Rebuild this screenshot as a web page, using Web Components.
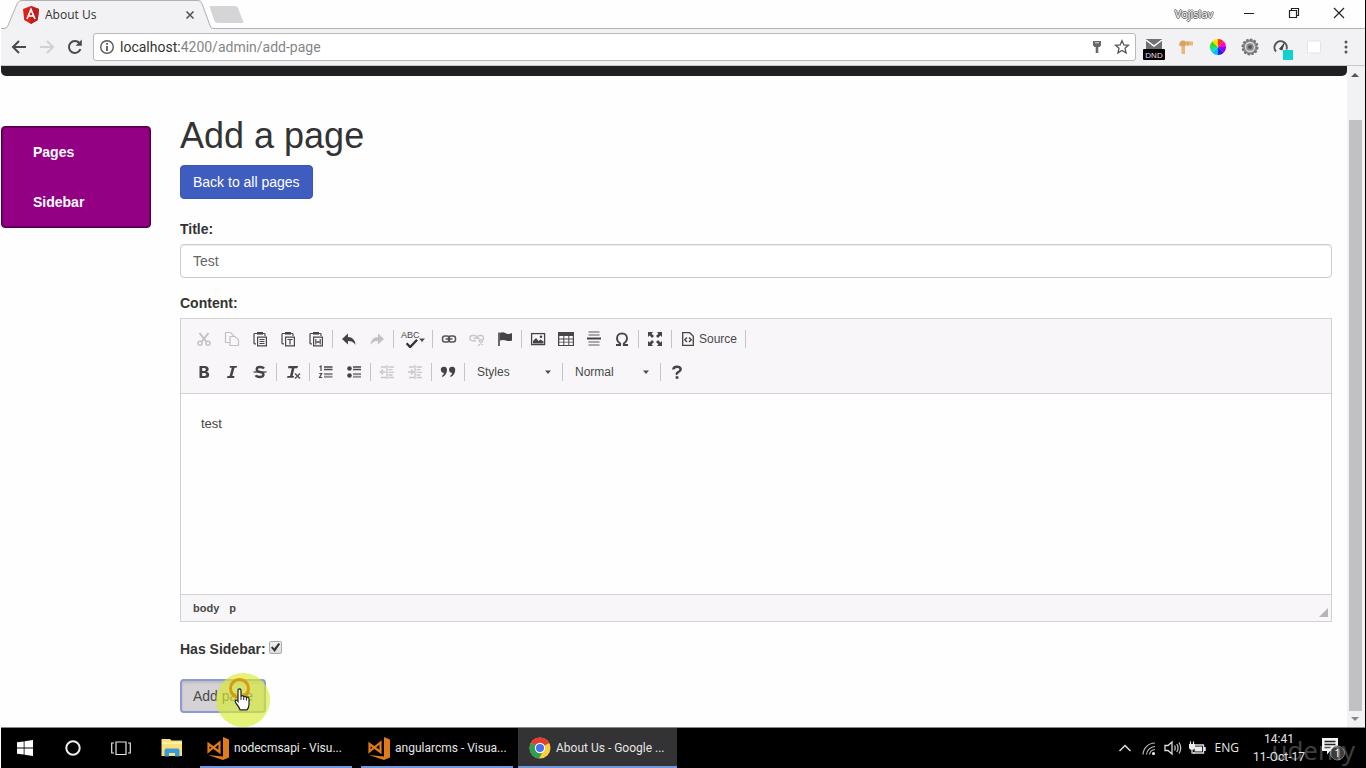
<!DOCTYPE html>
<html lang="en">
<head>
<meta charset="utf-8">
<title>About Us</title>
<style>
html,body{margin:0;height:100%}
body{background:#fefefe;font-family:"Liberation Sans",Arial,sans-serif;color:#333}
</style>
</head>
<body>
<desktop-screen></desktop-screen>
<script>
const BASE = `*{box-sizing:border-box}
button,input,select,textarea{font:inherit;color:inherit;margin:0}
button{border:0;background:none;padding:0;display:flex;align-items:center;justify-content:center}
a{color:inherit;text-decoration:none}`;
function define(name, css, html) {
  const t = document.createElement('template');
  t.innerHTML = `<style>${BASE}${css}</style>${html}`;
  customElements.define(name, class extends HTMLElement {
    constructor() {
      super();
      this.attachShadow({ mode: 'open' }).append(t.content.cloneNode(true));
    }
  });
}

/* Icon set: [viewBox size, markup] */
const board = '<path d="M5 2.5H2.8Q2 2.5 2 3.3V12q0 .9.9.9H4M11 2.5h1.2q.8 0 .8.8V5" fill="none" stroke="#484848" stroke-width="1.2"/><path d="M5 1h6v2.6H5z" fill="#484848"/><path d="M5.6 6.1h8.8v8.8H5.6z" fill="#f8f6f8" stroke="#484848" stroke-width="1.2"/>';
const ICONS = {
  angular: [18, '<path d="M9 0l8 3-1.2 11L9 18l-6.800-4L1 3z" fill="#d8231f"/><path d="M9 0l8 3-1.200 11L9 18z" fill="#b81f22"/><path d="M5 13L9 3.500 13 13M6.500 10h5" fill="none" stroke="#fff" stroke-width="1.700"/>'],
  tabclose: [10, '<path d="M1.500 1.500l7 7M8.500 1.500l-7 7" stroke="#555" stroke-width="1.600"/>'],
  back: [16, '<path d="M15 8H2M8 2L2 8l6 6" fill="none" stroke="#4a4a4c" stroke-width="2"/>'],
  forward: [16, '<path d="M1 8h13M8 2l6 6-6 6" fill="none" stroke="#d2d0d2" stroke-width="2"/>'],
  reload: [16, '<path d="M13.500 10.200A6 6 0 1 1 12.500 4" fill="none" stroke="#4a4a4c" stroke-width="2"/><path d="M14.800.5v6.200H8.600z" fill="#4a4a4c"/>'],
  info: [16, '<circle cx="8" cy="8" r="6.300" fill="none" stroke="#58585a" stroke-width="1.400"/><path d="M8 7v5M8 4v1.800" stroke="#58585a" stroke-width="1.800"/>'],
  key: [16, '<path d="M4 2h8v4.500L10.500 8H9.300v6H6.700V8H5.500L4 6.500z" fill="#68686a"/><path d="M6 3.800h4" stroke="#ddd"/>'],
  star: [16, '<path d="M8 1.700l1.900 4.200 4.500.4-3.400 3 1.100 4.500L8 11.400l-4.100 2.400L5 9.300l-3.400-3 4.500-.4z" fill="none" stroke="#555" stroke-width="1.300"/>'],
  mail: [22, '<path d="M3 1h16v11H3z" fill="#707072"/><path d="M3 2l8 6 8-6" fill="none" stroke="#fff" stroke-width="1.500"/><rect y="11" width="22" height="11" rx="1" fill="#050505"/><text x="11" y="20" font-size="8" font-family="Liberation Sans" text-anchor="middle" fill="#f0d8ea">DND</text>'],
  crane: [18, '<path d="M4 3.500h12v4H8V16H4.500V8H2V5z" fill="#e9b877"/><circle cx="6" cy="5.500" r="3" fill="#dba361"/><path d="M11 7.500v-4" stroke="#c88f4d"/>'],
  wheel: [16, '<path d="M8 8V0a8 8 0 0 1 5.700 2.300z" fill="#f31"/><path d="M8 8l5.700-5.700A8 8 0 0 1 16 8z" fill="#f0c"/><path d="M8 8h8a8 8 0 0 1-2.300 5.700z" fill="#80f"/><path d="M8 8l5.700 5.700A8 8 0 0 1 8 16z" fill="#22d"/><path d="M8 8v8a8 8 0 0 1-5.700-2.300z" fill="#0bf"/><path d="M8 8l-5.700 5.700A8 8 0 0 1 0 8z" fill="#1da"/><path d="M8 8H0a8 8 0 0 1 2.300-5.700z" fill="#3d1"/><path d="M8 8L2.300 2.300A8 8 0 0 1 8 0z" fill="#fd0"/>'],
  gear: [18, '<circle cx="9" cy="9" r="7.500" fill="#8b8a8c" stroke="#6f6f71" stroke-width="2" stroke-dasharray="2.400 1.500"/><circle cx="9" cy="9" r="4.500" fill="none" stroke="#ddd" stroke-width="1.300"/><circle cx="9" cy="9" r="2" fill="#555"/>'],
  gauge: [22, '<path d="M5 13.500a6.200 6.200 0 1 1 10.500-2" fill="none" stroke="#555" stroke-width="2"/><path d="M8.500 11L13 5.500l-2 6.500z" fill="#444" stroke="#444"/><path d="M12 12h10v10H12z" fill="#12d0d0"/>'],
  blank: [16, '<rect x="1.500" y="2" width="13" height="12" rx="1" fill="#fff" stroke="#e3e2e4"/>'],
  menu: [16, '<g fill="#555"><circle cx="8" cy="3" r="1.500"/><circle cx="8" cy="8" r="1.500"/><circle cx="8" cy="13" r="1.500"/></g>'],
  min: [12, '<path d="M1 6.500h10" stroke="#222"/>'],
  restore: [12, '<path d="M1.500 3.500h7v7h-7zM3.500 3.500v-2h7v7h-2" fill="none" stroke="#222" stroke-width="1.200"/>'],
  close: [12, '<path d="M1 1l10 10M11 1L1 11" stroke="#222" stroke-width="1.200"/>'],
  cut: [16, '<g fill="none" stroke="#c2c0c2"><path d="M3.500 2l6.700 8.500M12.500 2L5.800 10.500" stroke-width="2"/><circle cx="4" cy="12.300" r="2" stroke-width="1.500"/><circle cx="12" cy="12.300" r="2" stroke-width="1.500"/></g>'],
  copy: [16, '<g fill="#f8f6f8" stroke="#c2c0c2" stroke-width="1.200"><path d="M1.500 1.500h5l3 3v7h-8z"/><path d="M6 5.500h5l3.500 3.500v5.500H6z"/></g>'],
  paste: [16, board + '<path d="M7.500 8.500h5M7.500 10.500h5M7.500 12.500h5" stroke="#484848" stroke-width="1.200"/>'],
  pastet: [16, board + '<path d="M7.500 8.500h5M10 8.500v5" stroke="#484848" stroke-width="1.200"/>'],
  pastew: [16, board + '<path d="M7.800 8v5.500M12.200 8v5.500M7.800 11h4.400M10 10v2" stroke="#484848" stroke-width="1.100"/>'],
  undo: [16, '<path d="M7 2.500v3.600q7 .3 7.500 8Q12 9.800 7 10v3.600L1 8z" fill="#444"/>'],
  redo: [16, '<path d="M9 2.500v3.600q-7 .3-7.500 8Q4 9.800 9 10v3.600L15 8z" fill="#c2c0c2"/>'],
  link: [16, '<g fill="none" stroke="#565656" stroke-width="1.500"><rect x="1.500" y="5" width="7" height="6" rx="2.500"/><rect x="7.500" y="5" width="7" height="6" rx="2.500"/><path d="M4.500 8h7"/></g>'],
  unlink: [16, '<g fill="none" stroke="#c8c6c8" stroke-width="1.400"><path d="M8 6.500Q7.500 4.500 5.500 4.500h-2a2.600 2.600 0 0 0 0 5.200H7M8 6.500Q8.500 4.500 10.500 4.500h2q2 .2 2 2.500T12 9H9.500M4.500 7.200h6M10 10l4 4M14 10l-5 5"/></g>'],
  flag: [16, '<path d="M2 1.500V15" stroke="#444" stroke-width="1.600"/><path d="M3 2q3-1.500 5.500.2T15 2v7.500q-3 1.200-6 0T3 9.500z" fill="#444"/>'],
  image: [16, '<rect x="1.600" y="2.600" width="13" height="11" fill="none" stroke="#444" stroke-width="1.300"/><path d="M3 12.500V10l3-3 2.500 3 2-1.500 3 2v2z" fill="#444"/><circle cx="11" cy="5.800" r="1.300" fill="#444"/>'],
  table: [18, '<path d="M1 2h16v14H1z" fill="#484848"/><path d="M2.300 6h4v2.500h-4zM7.300 6h4v2.500h-4zM12.300 6h3.500v2.500h-3.500zM2.300 9.400h4v2.300h-4zM7.300 9.400h4v2.300h-4zM12.300 9.400h3.500v2.300h-3.500zM2.300 12.600h4V15h-4zM7.300 12.600h4V15h-4zM12.300 12.600h3.500V15h-3.500z" fill="#fcfafc"/>'],
  hr: [16, '<path d="M2.500 1h11M2.500 4h11M2.500 11h11M2.500 14h11" stroke="#aaa8aa" stroke-width="1.900"/><path d="M1 7.500h14" stroke="#444" stroke-width="2"/>'],
  omega: [16, '<path d="M2 14h4.200v-1.500Q3 10.500 3 7.200 3.400 2.500 8 2.300q4.600.2 5 4.900 0 3.300-3.200 5.300V14H14" fill="none" stroke="#444" stroke-width="1.800"/>'],
  max: [16, '<path d="M1 1h5L4.600 2.700 7 5 5 7 2.700 4.600 1 6zM15 1v5l-1.700-1.400L11 7 9 5l2.400-2.300L10 1zM1 15v-5l1.700 1.400L5 9l2 2-2.400 2.300L6 15zM15 15h-5l1.400-1.700L9 11l2-2 2.300 2.400L15 10z" fill="#444"/>'],
  source: [16, '<path d="M2.700 1.700h7l3.600 3.600v9H2.700z" fill="none" stroke="#444" stroke-width="1.300"/><path d="M7 6.500L4.800 8.800 7 11M9 6.500l2.200 2.300L9 11" fill="none" stroke="#444" stroke-width="1.400"/>'],
  bold: [16, '<path fill-rule="evenodd" d="M3.500 2h5.200q4 .2 4 3.300 0 1.900-1.900 2.500 2.400.6 2.400 3-.1 3.200-4.300 3.200H3.500zM6.200 4v3h2q1.700-.1 1.700-1.500T8.300 4zM6.200 9v3h2.300q1.800-.1 1.800-1.500T8.400 9z" fill="#444"/>'],
  italic: [16, '<path d="M6 2h7l-.4 1.800h-2.100L8.300 12h2.200l-.5 2H3l.5-2h2.100l2.200-8.200H5.500z" fill="#444"/>'],
  strike: [16, '<path d="M12 4.500Q11 3 8 3 4.700 3 4.700 5.300T8 8t3.500 2.600Q11.500 13 8 13t-4.300-1.800" fill="none" stroke="#444" stroke-width="2.300"/><path d="M1.500 8h13" stroke="#444" stroke-width="1.300"/>'],
  clear: [16, '<path d="M3.500 2H13l-.6 2.200h-3L7.600 12H9l-.5 1.800H2L2.500 12H5l1.800-7.800H3z" fill="#444"/><path d="M10 9.500l5 5M15 9.500l-5 5" stroke="#555" stroke-width="1.500"/>'],
  ol: [16, '<path d="M1.500 3L3 2v5M1.300 9.500h2.400L1.500 13.500h2.700" fill="none" stroke="#484848" stroke-width="1.200"/><path d="M6 3h8.500M6 5.500h8.500" stroke="#484848" stroke-width="1.300"/><path d="M6 10h8.500M6 12.700h8.500" stroke="#909092" stroke-width="1.900"/>'],
  ul: [16, '<circle cx="3.500" cy="4.500" r="2.300" fill="#444"/><circle cx="3.500" cy="11.500" r="2.300" fill="#444"/><path d="M7 3h8M7 5.500h8" stroke="#484848" stroke-width="1.300"/><path d="M7 10h8M7 12.700h8" stroke="#909092" stroke-width="1.900"/>'],
  outdent: [16, '<g stroke="#c8c6c8" fill="none" stroke-width="1.300"><path d="M8 1v14M9.500 3H15M9.500 5.700h4M9.500 8.300H15M9.500 11h4M9.500 13.500H15M1 8h5.500M4 5.500L1.500 8 4 10.500M2 3h5M2 13.500h5"/></g>'],
  indent: [16, '<g stroke="#c8c6c8" fill="none" stroke-width="1.300"><path d="M8 1v14M9.500 3H15M9.500 5.700h4M9.500 8.300H15M9.500 11h4M9.500 13.500H15M1 8h5.500M4 5.500L6.500 8 4 10.500M2 3h5M2 13.500h5"/></g>'],
  quote: [16, '<path d="M.8 5.500A3 3 0 0 1 7 6q0 4.500-4.500 7l-.6-1q2-1.500 2-3Q.8 8.500.8 5.500zM9 5.500a3 3 0 0 1 6.200.5q0 4.500-4.500 7l-.6-1q2-1.500 2-3Q9 8.500 9 5.500z" fill="#444"/>'],
  help: [16, '<path d="M4.300 5.500Q4.500 2.800 8 2.800t3.700 2.500Q11.700 7 9.500 8T8 10.800" fill="none" stroke="#444" stroke-width="2.400"/><path d="M6.700 12.200h2.700v2.600H6.700z" fill="#444"/>'],
  check: [16, '<path d="M3 10.500l4 4.500 8-8.500" fill="none" stroke="#333" stroke-width="2.600"/>'],
  caret: [6, '<path d="M0 1.500h6L3 5z" fill="#4b4b4b"/>'],
  up: [8, '<path d="M0 6h8L4 2z" fill="#555"/>'],
  down: [8, '<path d="M0 2h8L4 6z" fill="#858587"/>'],
  win: [16, '<path d="M0 2.300L6.700 1.400v6.100H0zM7.500 1.300L16 0v7.500H7.500zM0 8.400h6.700v6.200L0 13.700zM7.500 8.400H16V16l-8.500-1.300z" fill="#fff"/>'],
  cortana: [16, '<circle cx="8" cy="8" r="6.700" fill="none" stroke="#eee" stroke-width="2"/>'],
  taskview: [20, '<path d="M5 4h10v12.500H5zM3 5H.7v10H3M17 5h2.300v10H17" fill="none" stroke="#e4e4e4" stroke-width="1.200"/>'],
  folder: [22, '<path d="M.5 2H9l1.500 1.500H21V19H.5z" fill="#f9e07a"/><path d="M1 5h20v2H1z" fill="#fdf0a0"/><path d="M3.500 19.500v-6q0-2 2-2h11q2 0 2 2v6H14V16H8v3.500z" fill="#3a9ad9"/>'],
  vscode: [24, '<path d="M17 1l6 2.400v18L17 24 2 19l15 1.600z" fill="#e07b1c"/><path d="M2.500 8l11 8V6.500L2.500 15.500z" fill="none" stroke="#e07b1c" stroke-width="2.200"/>'],
  chrome: [22, '<circle cx="11" cy="11" r="10.500" fill="#fbcf3c"/><path d="M11 11L1.900 5.700A10.500 10.500 0 0 1 20.300 6z" fill="#e23f31"/><path d="M11 11L1.900 5.700A10.500 10.500 0 0 0 10 21.500l4.500-8z" fill="#2f9e4f"/><circle cx="11" cy="11" r="5.200" fill="#fff"/><circle cx="11" cy="11" r="4" fill="#4a6ff0"/>'],
  chevron: [14, '<path d="M1.500 10L7 4.500 12.500 10" fill="none" stroke="#ddd" stroke-width="1.500"/>'],
  wifi: [16, '<g fill="none" stroke="#b8b8b8" stroke-width="1.200"><path d="M2 14.500A12 12 0 0 1 14 3M5.500 14.500A9 9 0 0 1 14 6.500M8.500 14.500a6 6 0 0 1 5.500-5"/></g><circle cx="12.500" cy="13.500" r="1.500" fill="#fff"/>'],
  sound: [18, '<path d="M1 6.500h3L8 3v12L4 11.500H1z" fill="none" stroke="#ddd" stroke-width="1.300"/><path d="M10.500 6.500q1.500 2.500 0 5M12.800 5q2.500 4 0 8M15 3.500q3.500 5.500 0 11" fill="none" stroke="#ccc" stroke-width="1.200"/>'],
  battery: [18, '<path d="M6 6h9.500v8H5" fill="none" stroke="#ddd" stroke-width="1.300"/><path d="M7 7.500h7v5H6.500zM16 8h1.700v4H16zM1 5h6v4q-.5 2-3 2T1 9z" fill="#eee"/><path d="M2.500 2.500V5M5.500 2.500V5M4 11v3h3" fill="none" stroke="#eee" stroke-width="1.200"/>'],
  notify: [26, '<path d="M3 3h16v13h-8l-3 3.500V16H3z" fill="#f4f4f4"/><path d="M5.500 6.500h11M5.500 9.500h11M5.500 12.500h6" stroke="#222" stroke-width="1.300"/><circle cx="18.500" cy="18" r="7" fill="#3c3c3e" stroke="#777"/><text x="18.500" y="22" font-size="11" font-family="Open Sans" fill="#fff" text-anchor="middle">1</text>'],
  hand: [24, '<path d="M7 3.500q0-1.700 1.500-1.700T10 3.500V10q0-1.300 1.300-1.300t1.400 1.300v.5q0-1.200 1.300-1.200t1.400 1.200v.7q0-1 1.200-1t1.400 1.300v6q0 3-2 5.300H9q-.8-2.600-3.800-6.300-1.700-2.200-.7-3 1.300-1 2.500.8z" fill="#fff" stroke="#222" stroke-width="1.200"/><path d="M10 10v3M12.700 10.500V13M15.400 11v2.500" stroke="#222"/>']
};
customElements.define('ui-icon', class extends HTMLElement {
  connectedCallback() {
    if (this.shadowRoot) return;
    const [box, art] = ICONS[this.getAttribute('name')];
    const size = this.getAttribute('size') || box;
    this.attachShadow({ mode: 'open' }).innerHTML =
      `<style>:host{display:inline-flex;flex:none}svg{display:block}</style><svg width="${size}" height="${size}" viewBox="0 0 ${box} ${box}" aria-hidden="true">${art}</svg>`;
  }
});

define('tab-strip', `
:host{display:flex;height:29px;background:#fefefe;font:12px "Open Sans",sans-serif;border-bottom:1px solid #b4b3b5}
.tab{position:relative;display:flex;align-items:center;width:212px;height:29px;padding:0 18px 0 21px;gap:5px;color:#333;margin-bottom:-1px}
.shape{position:absolute;inset:0}
.tab>:not(.shape){position:relative}
.title{flex:1}
.new{width:36px;height:29px;margin-left:-4px}
.spacer{flex:1}
.user{align-self:center;padding-right:13px;color:#fff;font-size:11px;line-height:18px;text-shadow:1px 0 #666,-1px 0 #666,0 1px #666,0 -1px #666}
.win{width:45px;height:26px}
nav{display:flex;padding-right:4px}`,
`<div class="tab"><svg class="shape" width="212" height="29" aria-hidden="true"><path d="M0 28.500h3q3 0 4-3L16 4q2-3.500 4-3.500h177q3 0 4 3l8 22q1 3 3 3V29H0z" fill="#f2f1f3"/><path d="M0 28.500h3q3 0 4-3L16 4q2-3.500 4-3.500h177q3 0 4 3l8 22q1 3 3 3" fill="none" stroke="#b0afb1"/></svg>
<ui-icon name="angular"></ui-icon><span class="title">About Us</span><button aria-label="Close tab"><ui-icon name="tabclose"></ui-icon></button></div>
<button class="new" aria-label="New tab"><svg width="36" height="18"><path d="M1 2q-1-2 1-2h24q2 0 3 2l5 13q1 2-1 2H9q-3 0-4-3z" fill="#d5d4d6"/></svg></button>
<span class="spacer"></span><span class="user">Vojislav</span>
<nav><button class="win" aria-label="Minimize"><ui-icon name="min"></ui-icon></button><button class="win" aria-label="Restore"><ui-icon name="restore"></ui-icon></button><button class="win" aria-label="Close"><ui-icon name="close"></ui-icon></button></nav>`);

define('address-bar', `
:host{display:flex;align-items:center;height:37px;padding:0 3px 0 4px;background:#f2f1f3;border-bottom:1px solid #c8c7c9;font:14px/20px Roboto,"Open Sans",sans-serif}
.nav{width:28px;height:28px}
.url{flex:1;display:flex;align-items:center;height:28px;margin:0 2px 0 4px;padding:0 1px 0 5px;gap:5px;background:#fff;border:1px solid #b9b8ba;border-radius:3px}
.addr{flex:1;color:#858587}.addr b{font-weight:400;color:#333}
.url button{width:24px;height:24px}.url .info{width:16px}
.ext{width:32px;height:32px}
.acts{display:flex;gap:1px}
.low{padding-top:4px}`,
`<button class="nav" aria-label="Back"><ui-icon name="back"></ui-icon></button><button class="nav" aria-label="Forward"><ui-icon name="forward"></ui-icon></button><button class="nav" aria-label="Reload"><ui-icon name="reload"></ui-icon></button>
<div class="url"><button class="info" aria-label="Site information"><ui-icon name="info"></ui-icon></button><span class="addr"><b>localhost:</b>4200/admin/add-page</span><span class="acts"><button aria-label="Passwords"><ui-icon name="key"></ui-icon></button><button aria-label="Bookmark"><ui-icon name="star"></ui-icon></button></span></div>
<button class="ext low" aria-label="Do not disturb"><ui-icon name="mail"></ui-icon></button><button class="ext" aria-label="Crane"><ui-icon name="crane"></ui-icon></button><button class="ext" aria-label="Color picker"><ui-icon name="wheel"></ui-icon></button><button class="ext" aria-label="Settings"><ui-icon name="gear"></ui-icon></button><button class="ext low" aria-label="Speed"><ui-icon name="gauge"></ui-icon></button><button class="ext" aria-label="Extension"><ui-icon name="blank"></ui-icon></button><button class="ext" aria-label="Menu"><ui-icon name="menu"></ui-icon></button>`);

define('admin-sidebar', `
:host{display:block;width:150px;background:#930083;border:1px solid #4d0048;border-radius:4px;box-shadow:inset 0 0 1px 1px #6b0062;font-weight:700;font-size:14px;color:#fff}
a{display:block;line-height:50px;padding-left:31px}`,
`<nav><a href="#pages">Pages</a><a href="#sidebar">Sidebar</a></nav>`);

const btn = (n, l) => `<button aria-label="${l}"><ui-icon name="${n}"></ui-icon></button>`;
const sep = '<i></i>';
define('rich-editor', `
:host{display:block}
label{display:block;font-weight:700;line-height:20px;margin-bottom:5px}
.frame{border:1px solid #d1d0d2}
.bar{background:#f8f6f8;border-bottom:1px solid #d1d0d2;padding:6px 9px 7px;display:grid;gap:5px;font-size:12px;color:#484848}
.row{display:flex;align-items:center;height:28px}
.row button{width:28px;height:28px}
.row .spell{width:34px;position:relative;font:9px/10px "Liberation Sans",sans-serif;align-items:flex-start;justify-content:flex-start;padding:5px 0 0 5px}
.spell ui-icon{position:absolute;left:8px;top:9px}.spell .c{left:23px;top:12px}
.row .src{width:69px;gap:3px;font-size:12px}
i{width:1px;height:18px;margin:0 2px;background:#c6c4c6}
.combo{display:flex;align-items:center;width:93px;padding:0 9px 0 10px}
select{flex:1;min-width:0;appearance:none;border:0;padding:0;background:none}
textarea{display:block;width:100%;height:200px;border:0;padding:20px;resize:none;background:#fefefe;font-size:13px;line-height:20px;color:#444}
.path{display:flex;align-items:center;height:27px;border-top:1px solid #d1d0d2;background:#f8f6f8;padding:0 3px 0 12px;gap:10px;font-size:11px;font-weight:700;color:#484848}
.grip{margin:auto 0 4px auto;width:9px;height:9px;background:#b5b4b6;clip-path:polygon(100% 0,100% 100%,0 100%)}`,
`<label for="content">Content:</label><div class="frame"><div class="bar"><div class="row">
${btn('cut','Cut')}${btn('copy','Copy')}${btn('paste','Paste')}${btn('pastet','Paste as text')}${btn('pastew','Paste from Word')}${sep}${btn('undo','Undo')}${btn('redo','Redo')}${sep}<button class="spell" aria-label="Spell check">ABC<ui-icon name="check" size="14"></ui-icon><ui-icon class="c" name="caret"></ui-icon></button>${sep}${btn('link','Link')}${btn('unlink','Unlink')}${btn('flag','Anchor')}${sep}${btn('image','Image')}${btn('table','Table')}${btn('hr','Horizontal line')}${btn('omega','Special character')}${sep}${btn('max','Maximize')}${sep}<button class="src"><ui-icon name="source"></ui-icon>Source</button>${sep}
</div><div class="row">
${btn('bold','Bold')}${btn('italic','Italic')}${btn('strike','Strikethrough')}${sep}${btn('clear','Remove format')}${sep}${btn('ol','Numbered list')}${btn('ul','Bulleted list')}${sep}${btn('outdent','Decrease indent')}${btn('indent','Increase indent')}${sep}${btn('quote','Block quote')}${sep}
<span class="combo"><select aria-label="Styles"><option>Styles</option></select><ui-icon name="caret"></ui-icon></span>${sep}<span class="combo"><select aria-label="Format"><option>Normal</option></select><ui-icon name="caret"></ui-icon></span>${sep}${btn('help','Help')}
</div></div><textarea id="content">test</textarea><div class="path"><span>body</span><span>p</span><span class="grip"></span></div></div>`);

define('page-form', `
:host{display:block;font-size:14px;line-height:20px}
h1{font-size:36px;font-weight:400;line-height:40px;margin:0 0 9px}
.back{display:inline-block;vertical-align:top;padding:6px 12px;border:1px solid #3a56b4;border-radius:4px;background:#3f5dc0;color:#fff}
form{margin-top:20px}
.field label,.check label{display:block;font-weight:700}
.field label{margin-bottom:5px}
.field input{display:block;width:100%;height:34px;padding:0 12px;border:1px solid #cccbcd;border-radius:4px;background:#fff;color:#666;box-shadow:inset 0 1px 1px #eee}
rich-editor{margin:15px 0 17px}
.check{display:flex;gap:3px}
.check input{appearance:none;width:13px;height:13px;margin-top:2px;border:1px solid #aaa;border-radius:2px;background:linear-gradient(#f0f0f0,#dcdcdc)}
.check input:checked::before{content:"";display:block;width:11px;height:11px;background:#333;clip-path:polygon(12% 50%,28% 40%,42% 60%,80% 8%,96% 18%,46% 92%)}
.submit{position:relative;width:max-content;margin-top:20px}
.submit button{height:34px;padding:0 11px;border:2px solid #8c9ad4;border-radius:4px;background:#d4d2d5;box-shadow:inset 0 2px 3px #bbb;color:#4a4a4a}
.halo{position:absolute;left:36px;top:-6px;width:54px;height:54px;border-radius:50%;background:#d8ec32a8}
.ring{position:absolute;left:49px;top:-1px;width:21px;height:21px;border:3px solid #d99a10;border-radius:50%}
.hand{position:absolute;left:51px;top:8px}`,
`<h1>Add a page</h1><a class="back" href="#pages">Back to all pages</a>
<form onsubmit="return false"><div class="field"><label for="title">Title:</label><input id="title" value="Test"></div>
<rich-editor></rich-editor>
<div class="check"><label for="side">Has Sidebar:</label><input type="checkbox" id="side" checked></div>
<div class="submit"><button>Add page</button><span class="halo"></span><span class="ring"></span><ui-icon class="hand" name="hand"></ui-icon></div></form>`);

define('scroll-track', `
:host{display:flex;flex-direction:column;align-items:center;width:18px;background:#f2f1f3;padding:5px 2px 4px 0}
.thumb{flex:1;width:13px;margin:41px 0 4px;background:#c1c0c2}`,
`<ui-icon name="up"></ui-icon><span class="thumb"></span><ui-icon name="down"></ui-icon>`);

define('browser-view', `
:host{display:flex;flex:1;border-bottom:1px solid #888;background:#fefefe}
.doc{flex:1;min-width:0}
.navbar{height:10px;background:#202022;border-radius:0 0 5px 5px}
.cols{display:grid;grid-template-columns:150px 1fr;gap:29px;align-items:start;padding-right:15px}
admin-sidebar{margin-top:50px}
page-form{margin:40px 0 13px}`,
`<div class="doc"><header class="navbar"></header><div class="cols"><admin-sidebar></admin-sidebar><page-form></page-form></div></div><scroll-track></scroll-track>`);

define('task-button', `
:host{display:block;height:40px;border-bottom:2px solid #6f98de}
:host([active]){background:#333234}
button{width:100%;height:40px;justify-content:flex-start;padding-left:6px;gap:4px;white-space:nowrap}
:host([active]) button{padding-left:11px;gap:5px}`,
`<button><slot></slot></button>`);

define('task-bar', `
:host{display:flex;height:40px;background:#000;color:#e6e6e6;font:12px/18px "Open Sans",sans-serif}
.sys{display:flex;width:199px}
.sys button{width:48px}.sys button:last-child{width:54px}
.apps{display:grid;grid-template-columns:152px 152px 159px;column-gap:9px;font-family:Roboto,sans-serif}
.apps task-button:last-child{margin-left:-4px;width:159px}
.tray{display:flex;align-items:center;margin-left:auto;position:relative;padding-right:20px}
.tray button{width:24px;height:40px}
.lang{padding:0 13px 0 6px}
.clock{width:54px;text-align:center;white-space:nowrap;font-family:Roboto,sans-serif}
.tray .note{width:26px;margin-left:13px}
.mark{position:absolute;right:10px;bottom:0;font-size:26px;line-height:36px;color:#fff;opacity:.25}`,
`<div class="sys"><button aria-label="Start"><ui-icon name="win"></ui-icon></button><button aria-label="Cortana"><ui-icon name="cortana"></ui-icon></button><button aria-label="Task view"><ui-icon name="taskview"></ui-icon></button><button aria-label="File Explorer"><ui-icon name="folder"></ui-icon></button></div>
<div class="apps"><task-button><ui-icon name="vscode"></ui-icon>nodecmsapi - Visu...</task-button><task-button><ui-icon name="vscode"></ui-icon>angularcms - Visua...</task-button><task-button active><ui-icon name="chrome"></ui-icon>About Us - Google ...</task-button></div>
<div class="tray"><button aria-label="Hidden icons"><ui-icon name="chevron"></ui-icon></button><button aria-label="Network"><ui-icon name="wifi"></ui-icon></button><button aria-label="Volume"><ui-icon name="sound"></ui-icon></button><button aria-label="Battery"><ui-icon name="battery"></ui-icon></button><span class="lang">ENG</span><span class="clock">14:41<br>11-Oct-17</span><button class="note" aria-label="Notifications"><ui-icon name="notify"></ui-icon></button><span class="mark">udemy</span></div>`);

define('desktop-screen', `
:host{display:flex;flex-direction:column;min-height:100vh;padding-left:1px;border-right:1px solid #000;box-sizing:border-box}`,
`<tab-strip></tab-strip><address-bar></address-bar><browser-view></browser-view><task-bar></task-bar>`);
</script>
</body>
</html>
